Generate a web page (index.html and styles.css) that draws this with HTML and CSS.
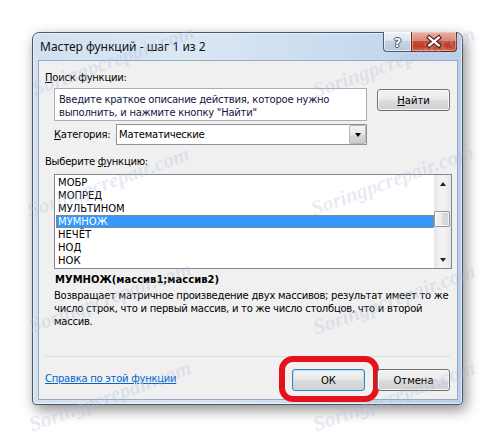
FILE: index.html
```html
<!DOCTYPE html>
<html lang="ru">
<head>
<meta charset="utf-8">
<title>Мастер функций</title>
<link rel="stylesheet" href="styles.css">
</head>
<body>
<div class="window">
  <div class="titlebar">
    <span class="title">Мастер функций - шаг 1 из 2</span>
    <div class="caption-btns">
      <div class="cap help"><span>?</span></div>
      <div class="cap close">
        <svg width="46" height="19" viewBox="0 0 46 19">
          <path d="M18 5.5 L28 13.5 M28 5.5 L18 13.5" stroke="#4a1d15" stroke-width="4.6" stroke-linecap="square" fill="none"/>
          <path d="M18 5.5 L28 13.5 M28 5.5 L18 13.5" stroke="#ffffff" stroke-width="2.4" stroke-linecap="square" fill="none"/>
        </svg>
      </div>
    </div>
  </div>
  <div class="client">
    <div class="lbl"><u>П</u>оиск функции:</div>
    <div class="search-row">
      <div class="textbox">Введите краткое описание действия, которое нужно<br>выполнить, и нажмите кнопку "Найти"</div>
      <div class="btn btn-find"><span><u>Н</u>айти</span></div>
    </div>
    <div class="cat-row">
      <span class="cat-lbl"><u>К</u>атегория:</span>
      <div class="combo">
        <span class="combo-val">Математические</span>
        <span class="combo-arrow"><span class="tri-down"></span></span>
      </div>
    </div>
    <div class="lbl lbl-fn">Выберите <u>ф</u>ункцию:</div>
    <div class="listbox">
      <ul class="items">
        <li>МОБР</li>
        <li>МОПРЕД</li>
        <li>МУЛЬТИНОМ</li>
        <li class="sel">МУМНОЖ</li>
        <li>НЕЧЁТ</li>
        <li>НОД</li>
        <li>НОК</li>
      </ul>
      <div class="scrollbar">
        <div class="sb-arrow"><span class="sb-tri up"></span></div>
        <div class="sb-track"><div class="sb-thumb"></div></div>
        <div class="sb-arrow"><span class="sb-tri down"></span></div>
      </div>
    </div>
    <div class="sig">МУМНОЖ(массив1;массив2)</div>
    <p class="desc">Возвращает матричное произведение двух массивов; результат имеет то же<br>число строк, что и первый массив, и то же число столбцов, что и второй<br>массив.</p>
    <div class="footer">
      <a class="help-link" href="#">Справка по этой функции</a>
      <div class="btns">
        <div class="btn btn-default"><span>ОК</span><span class="highlight"></span></div>
        <div class="btn"><span>Отмена</span></div>
      </div>
    </div>
  </div>
</div>
<span class="wm wm1">Soringpcrepair.com</span>
<span class="wm wm2">Soringpcrepair.com</span>
<span class="wm wm3">Soringpcrepair.com</span>
<span class="wm wm4">Soringpcrepair.com</span>
<span class="wm wm5">Soringpcrepair.com</span>
<span class="wm wm6">Soringpcrepair.com</span>
<span class="wm wm7">Soringpcrepair.com</span>
<span class="wm wm8">Soringpcrepair.com</span>
</body>
</html>
```

FILE: styles.css
```css
html, body {
  margin: 0;
  padding: 0;
}
body {
  width: 497px;
  height: 439px;
  overflow: hidden;
  background: #ffffff;
  position: relative;
  font-family: "DejaVu Sans", sans-serif;
}

.window {
  margin: 32px 0 0 32px;
  width: 431px;
  height: 373px;
  box-sizing: border-box;
  border: 1px solid #4a5666;
  border-radius: 7px 7px 4px 4px;
  background: linear-gradient(90deg, #d2e0f0 0%, #dbe7f4 35%, #cadcf0 70%, #b9d0ea 100%);
  box-shadow: 3px 5px 14px rgba(0, 0, 0, 0.45), inset 0 0 0 1px rgba(255, 255, 255, 0.55);
  display: flex;
  flex-direction: column;
}

.titlebar {
  height: 27px;
  display: flex;
  justify-content: space-between;
  align-items: flex-start;
}
.title {
  font-family: "Noto Sans", sans-serif;
  font-size: 12px;
  line-height: 27px;
  padding-left: 7px;
  color: #111;
}
.caption-btns {
  display: flex;
  margin-right: 5px;
  margin-top: -1px;
}
.cap {
  height: 20px;
  box-sizing: border-box;
  border: 1px solid #4f5c6c;
  border-top: none;
  display: flex;
  align-items: center;
  justify-content: center;
}
.help {
  width: 28px;
  border-right: none;
  border-radius: 0 0 0 4px;
  background: linear-gradient(#eef3f9 0%, #dce5ef 45%, #c5d3e2 50%, #b9c9dd 100%);
  box-shadow: inset 0 0 0 1px rgba(255, 255, 255, 0.6);
}
.help span {
  font-family: "DejaVu Sans", sans-serif;
  font-weight: bold;
  font-size: 13px;
  line-height: 13px;
  color: #fff;
  text-shadow: 1px 0 0 #4a5563, -1px 0 0 #4a5563, 0 1px 0 #4a5563, 0 -1px 0 #4a5563;
  margin-top: 1px;
}
.close {
  width: 46px;
  border-radius: 0 0 4px 0;
  background: linear-gradient(#e9b3a5 0%, #d98675 45%, #c84c36 50%, #c03a25 75%, #d7694e 100%);
  box-shadow: inset 0 0 0 1px rgba(255, 220, 210, 0.45);
  border-color: #6e2a1e;
}
.close svg {
  display: block;
  margin-top: -1px;
}

.client {
  flex: 1;
  margin: 0 4px 4px 5px;
  border: 1px solid #93a9c4;
  background: #f0f0f0;
  padding: 10px 7px 0 6px;
  display: flex;
  flex-direction: column;
  font-family: "DejaVu Sans", sans-serif;
  font-size: 10px;
  line-height: 13px;
  letter-spacing: -0.25px;
  color: #000;
}

.lbl {
  height: 13px;
}
.lbl-fn {
  margin-top: 10px;
}

.search-row {
  display: flex;
  align-items: flex-start;
  margin-top: 4px;
  padding-left: 9px;
}
.textbox {
  width: 313px;
  height: 33px;
  box-sizing: border-box;
  border: 1px solid #abadb3;
  background: #fff;
  padding: 4px 4px 0;
  color: #141446;
  white-space: nowrap;
}

.btn {
  position: relative;
  width: 73px;
  height: 22px;
  box-sizing: border-box;
  border: 1px solid #707070;
  border-radius: 3px;
  background: linear-gradient(#f2f2f2 0%, #ebebeb 45%, #dddddd 50%, #cfcfcf 100%);
  box-shadow: inset 0 0 0 1px rgba(255, 255, 255, 0.75);
  display: flex;
  align-items: center;
  justify-content: center;
  color: #000;
  letter-spacing: 0;
}
.btn-find {
  margin-left: 10px;
  margin-top: 1px;
}
.btn-default {
  border-color: #3c7fb1;
  box-shadow: inset 0 0 0 1px #b9e2f8;
}

.cat-row {
  display: flex;
  align-items: center;
  margin-top: 3px;
  padding-left: 9px;
}
.cat-lbl {
  width: 62px;
}
.combo {
  width: 251px;
  height: 21px;
  box-sizing: border-box;
  border: 1px solid #8f9398;
  background: #fff;
  display: flex;
  align-items: stretch;
}
.combo-val {
  flex: 1;
  padding-left: 2px;
  line-height: 19px;
}
.combo-arrow {
  width: 17px;
  box-sizing: border-box;
  border: 1px solid #b4b7bb;
  border-radius: 2px;
  background: linear-gradient(#f4f4f4 0%, #e6e6e6 50%, #d6d6d6 51%, #cdcdcd 100%);
  display: flex;
  align-items: center;
  justify-content: center;
}
.tri-down {
  width: 0;
  height: 0;
  border-left: 3.5px solid transparent;
  border-right: 3.5px solid transparent;
  border-top: 4px solid #000;
  margin-top: 1px;
}

.listbox {
  margin-top: 6px;
  margin-left: 9px;
  width: 398px;
  height: 95px;
  box-sizing: border-box;
  border: 1px solid #828790;
  background: #fff;
  display: flex;
}
.items {
  flex: 1;
  list-style: none;
  margin: 0 0 0 1px;
  padding: 1px 0 0;
  letter-spacing: 0;
}
.items li {
  height: 13px;
  line-height: 13px;
  padding-left: 2px;
  box-sizing: border-box;
}
.items li.sel {
  background: #3399ff;
  color: #fff;
  outline: 1px dotted #c7771f;
  outline-offset: -1px;
}
.scrollbar {
  width: 17px;
  display: flex;
  flex-direction: column;
  background: linear-gradient(90deg, #e6e6e6, #f2f2f2 40%, #f2f2f2 60%, #e6e6e6);
}
.sb-arrow {
  height: 17px;
  display: flex;
  align-items: center;
  justify-content: center;
}
.sb-tri {
  width: 0;
  height: 0;
  border-left: 3.5px solid transparent;
  border-right: 3.5px solid transparent;
}
.sb-tri.up {
  border-bottom: 4px solid #222;
}
.sb-tri.down {
  border-top: 4px solid #222;
}
.sb-track {
  flex: 1;
}
.sb-thumb {
  margin: 19px 1px 0 0;
  height: 16px;
  box-sizing: border-box;
  border: 1px solid #979797;
  border-radius: 2px;
  background: linear-gradient(90deg, #f4f4f4, #eaeaea 50%, #dcdcdc 51%, #d3d3d3);
  box-shadow: inset 0 0 0 1px rgba(255, 255, 255, 0.7);
}

.sig {
  margin-top: 4px;
  padding-left: 10px;
  font-weight: bold;
  letter-spacing: 0;
}
.desc {
  margin: 3px 0 0;
  padding-left: 9px;
  white-space: nowrap;
}

.footer {
  margin-top: auto;
  border-top: 1px solid #d5dfe6;
  padding: 12px 0 8px;
  display: flex;
  align-items: center;
  justify-content: space-between;
}
.help-link {
  color: #0066cc;
  text-decoration: underline;
  margin-top: -3px;
}
.btns {
  display: flex;
  gap: 12px;
}
.highlight {
  position: absolute;
  left: -14px;
  top: -14px;
  right: -15px;
  bottom: -12px;
  border: 6px solid #e5121b;
  border-radius: 14px;
  pointer-events: none;
}

.wm {
  position: absolute;
  font-family: "Liberation Serif", serif;
  font-style: italic;
  font-weight: bold;
  font-size: 21px;
  line-height: 24px;
  color: rgba(175, 186, 215, 0.3);
  transform: rotate(-20deg);
  transform-origin: center;
  white-space: nowrap;
  pointer-events: none;
  width: 176px;
  text-align: center;
}
.wm1 { left: 25px; top: 48px; }
.wm2 { left: 306px; top: 50px; }
.wm3 { left: 20px; top: 170px; }
.wm4 { left: 304px; top: 168px; }
.wm5 { left: 22px; top: 285px; }
.wm6 { left: 306px; top: 287px; }
.wm7 { left: 22px; top: 384px; }
.wm8 { left: 306px; top: 384px; }
```
